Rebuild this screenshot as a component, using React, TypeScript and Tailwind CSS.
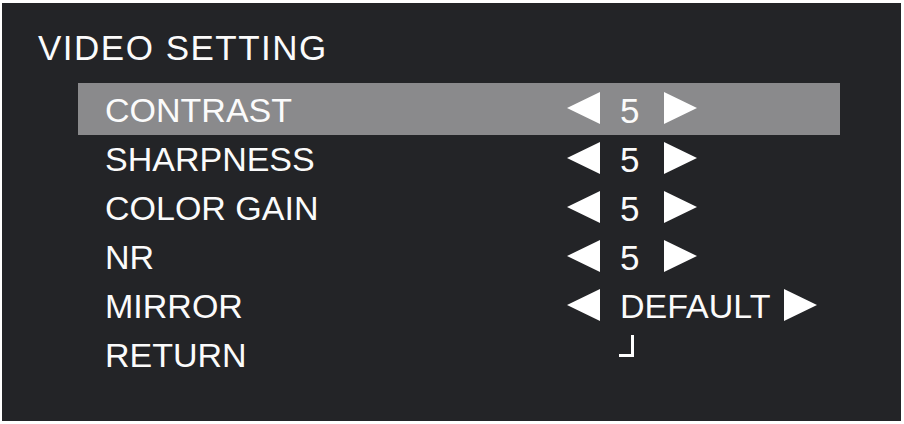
type MenuRow = {
  label: string
  value?: string
  kind: 'number' | 'option' | 'return'
}

const rows: MenuRow[] = [
  { label: 'CONTRAST', value: '5', kind: 'number' },
  { label: 'SHARPNESS', value: '5', kind: 'number' },
  { label: 'COLOR GAIN', value: '5', kind: 'number' },
  { label: 'NR', value: '5', kind: 'number' },
  { label: 'MIRROR', value: 'DEFAULT', kind: 'option' },
  { label: 'RETURN', kind: 'return' },
]

function LeftArrow() {
  return (
    <svg width="33" height="32" viewBox="0 0 33 32" className="mb-[4px] shrink-0">
      <polygon points="0,16 33,0 33,32" fill="#ffffff" />
    </svg>
  )
}

function RightArrow() {
  return (
    <svg width="33" height="32" viewBox="0 0 33 32" className="mb-[4px] shrink-0">
      <polygon points="0,0 33,16 0,32" fill="#ffffff" />
    </svg>
  )
}

function Row({ row, active }: { row: MenuRow; active: boolean }) {
  return (
    <li
      className={`flex pl-[27px] ${
        active ? 'h-[52px] bg-[#8a8a8c] pt-[2px] items-center' : 'h-[49px] items-center'
      }`}
    >
      <span className="w-[462px] shrink-0">{row.label}</span>
      {row.kind === 'return' ? (
        <span className="self-start mt-[4px] ml-[52px] w-[15px] h-[22px] border-r-[3px] border-b-[3px] border-white" />
      ) : (
        <div className="flex items-center">
          <LeftArrow />
          {row.kind === 'number' ? (
            <span className="ml-[20px] w-[44px] text-[35px]">{row.value}</span>
          ) : (
            <span className="ml-[20px] mr-[13px]">{row.value}</span>
          )}
          <RightArrow />
        </div>
      )}
    </li>
  )
}

export default function App() {
  return (
    <div className="w-[904px] h-[424px] bg-white pt-[3px] pl-[2px] pr-[3px] pb-[3px]">
      <div
        className="h-full bg-[#232427] text-[#fbfbfb] pt-[25px]"
        style={{ fontFamily: '"Liberation Sans", Arial, sans-serif' }}
      >
        <h1 className="pl-[36px] text-[35px] leading-[40px] tracking-[1.5px]">VIDEO SETTING</h1>
        <ul className="mt-[15px] ml-[76px] w-[762px] text-[34px] leading-[49px]">
          {rows.map((row, i) => (
            <Row key={row.label} row={row} active={i === 0} />
          ))}
        </ul>
      </div>
    </div>
  )
}
